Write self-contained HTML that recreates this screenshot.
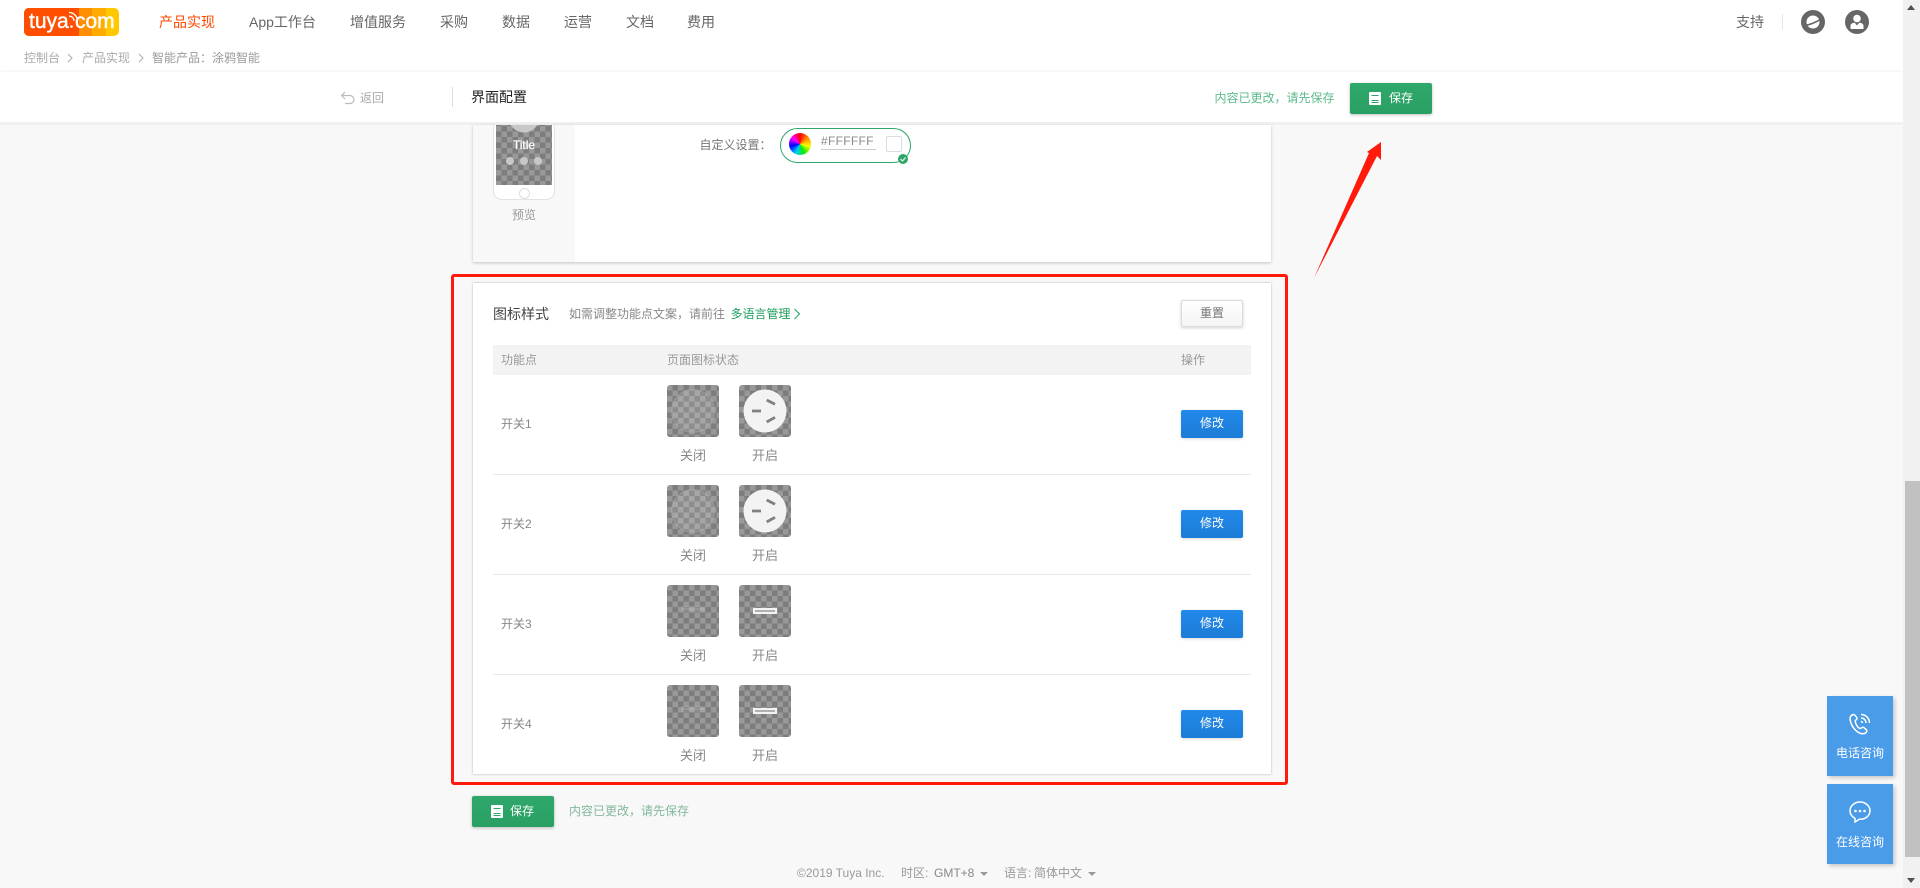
<!DOCTYPE html>
<html lang="zh-CN"><head><meta charset="utf-8"><title>界面配置</title>
<style>
html,body{margin:0;padding:0;width:1920px;height:888px;overflow:hidden;background:#f8f8f8}
body{position:relative;font-family:"Liberation Sans","Noto Sans CJK SC",sans-serif;font-size:12px;color:#888}
div,span,svg{position:absolute;display:block}
.t{line-height:20px;height:20px;white-space:nowrap}
.nav{top:12px;font-size:14px;color:#666}
.bc{top:48px;color:#aaa}
.ck{width:52px;height:52px;border-radius:3px;background:conic-gradient(#7d7d7d 25%,#999 0 50%,#7d7d7d 0 75%,#999 0) 0 0/11px 11px}
.lb{font-size:13px;color:#888;width:52px;text-align:center}
.btn{color:#fff;text-align:center;border-radius:2px;box-sizing:border-box}
.mod{left:1181px;width:62px;height:28px;line-height:27px;background:linear-gradient(#2289ea,#1c7cd6);box-shadow:0 1px 3px rgba(0,0,0,.15)}
.sv{width:82px;height:31px;line-height:31px;background:linear-gradient(#2fa86b,#2a9f64);box-shadow:0 1px 3px rgba(0,0,0,.25)}
.line{left:493px;width:758px;height:1px;background:#e8e8e8}
.side{left:1827px;width:66px;height:80px;background:#4a9be8;box-shadow:2px 2px 4px rgba(0,0,0,.2)}
.side .t{left:0;width:66px;text-align:center;color:#fff;top:48px}
</style></head><body>

<!-- header -->
<div style="left:0;top:0;width:1903px;height:72px;background:#fff"></div>
<svg style="left:24px;top:8px" width="95" height="28" viewBox="0 0 95 28">
<defs><clipPath id="lg"><rect width="95" height="28" rx="5"/></clipPath></defs>
<g clip-path="url(#lg)"><rect width="95" height="28" fill="#ffc800"/><rect width="82" height="28" fill="#ffab00"/><rect width="68" height="28" fill="#ff8f00"/><rect width="55" height="28" fill="#ff4e00"/></g>
<text x="5" y="20" font-family="Liberation Sans" font-size="21" fill="#fff" stroke="#fff" stroke-width=".4">tuya</text>
<circle cx="47.500" cy="18.500" r="1.300" fill="#fff"/>
<text x="51" y="20" font-family="Liberation Sans" font-size="21" fill="#fff" stroke="#fff" stroke-width=".4">com</text>
<path d="M45 8a5 5 0 0 1 5 5M45 4.500a8.500 8.500 0 0 1 8.500 8.500" fill="none" stroke="#fff" stroke-width="1.300"/>
</svg>
<div class="t nav" style="left:159px;color:#ff4800">产品实现</div>
<div class="t nav" style="left:249px">App工作台</div>
<div class="t nav" style="left:350px">增值服务</div>
<div class="t nav" style="left:440px">采购</div>
<div class="t nav" style="left:502px">数据</div>
<div class="t nav" style="left:564px">运营</div>
<div class="t nav" style="left:626px">文档</div>
<div class="t nav" style="left:687px">费用</div>

<div class="t bc" style="left:24px">控制台</div>
<svg style="left:66px;top:53px" width="8" height="10"><path d="M2 1l4 4-4 4" fill="none" stroke="#aaa"/></svg>
<div class="t bc" style="left:82px">产品实现</div>
<svg style="left:137px;top:53px" width="8" height="10"><path d="M2 1l4 4-4 4" fill="none" stroke="#aaa"/></svg>
<div class="t bc" style="left:152px;color:#999">智能产品：涂鸦智能</div>

<div class="t" style="left:1736px;top:12px;font-size:14px;color:#666">支持</div>
<div style="left:1782px;top:14px;width:1px;height:16px;background:#e5e5e5"></div>
<svg style="left:1801px;top:10px" width="24" height="24" viewBox="0 0 24 24"><circle cx="12" cy="12" r="12" fill="#666"/><circle cx="12" cy="12" r="6.500" fill="#fff"/><path d="M3.500 15.500C8 15 15 12.500 20 9" fill="none" stroke="#666" stroke-width="1.600"/></svg>
<svg style="left:1845px;top:10px" width="24" height="24" viewBox="0 0 24 24"><circle cx="12" cy="12" r="12" fill="#666"/><circle cx="12" cy="8.500" r="3.800" fill="#fff"/><path d="M5.500 19v-3.500c0-1.500 2-2.500 4-3l2.500 3 2.500-3c2 .5 4 1.500 4 3V19z" fill="#fff"/></svg>

<!-- sub-bar -->
<div style="left:0;top:72px;width:1903px;height:50px;background:#fff;box-shadow:0 0 4px rgba(0,0,0,.08)"></div>
<div style="left:0;top:122px;width:1903px;height:3px;background:#f1f1f1"></div>
<svg style="left:340px;top:91px" width="16" height="14" viewBox="0 0 16 14"><path d="M5 1L1.500 4.500 5 8M2 4.500h8a4 4 0 0 1 0 8H5" fill="none" stroke="#bbb" stroke-width="1.200"/></svg>
<div class="t" style="left:360px;top:88px;color:#aaa">返回</div>
<div style="left:452px;top:87px;width:1px;height:20px;background:#ddd"></div>
<div class="t" style="left:471px;top:87px;font-size:14px;color:#222">界面配置</div>
<div class="t" style="left:1214.500px;top:88px;color:#5dba8c">内容已更改，请先保存</div>
<div class="btn sv" style="left:1350px;top:83px"><svg style="left:19px;top:9px" width="12" height="13" viewBox="0 0 12 13"><path d="M1 0h10a1 1 0 0 1 1 1v11a1 1 0 0 1-1 1H1a1 1 0 0 1-1-1V1a1 1 0 0 1 1-1z" fill="#fff"/><path d="M2.500 3.500h7M2.500 8.500h7M2.500 10.500h7" stroke="#2ca468" stroke-width="1.100"/></svg><span style="left:39px;top:0">保存</span></div>

<!-- card 1 -->
<div style="left:473px;top:125px;width:798px;height:137px;background:#fff;box-shadow:0 1px 3px rgba(0,0,0,.22)"></div>
<div style="left:473px;top:125px;width:102px;height:137px;background:#f8f8f8"></div>
<div style="left:493px;top:100px;width:60px;height:98px;border:1px solid #e3e3e3;border-radius:9px;background:#fff;clip-path:inset(25px -2px -2px -2px)"></div>
<div class="ck" style="left:496px;top:125px;width:56px;height:60px;border-radius:0;background-position:0 1px"></div>
<svg style="left:496px;top:125px" width="56" height="8"><circle cx="28" cy="-8" r="15.500" fill="#c8c8c8"/></svg>
<div class="t" style="left:496px;top:135px;width:56px;text-align:center;color:#fff;-webkit-text-stroke:.25px #fff">Title</div>
<div style="left:506px;top:157px;width:8px;height:8px;border-radius:50%;background:#c8c8c8"></div>
<div style="left:520px;top:157px;width:8px;height:8px;border-radius:50%;background:#c8c8c8"></div>
<div style="left:534px;top:157px;width:8px;height:8px;border-radius:50%;background:#c8c8c8"></div>
<div style="left:519px;top:188px;width:9px;height:9px;border:1px solid #ddd;border-radius:50%;background:#fff"></div>
<div class="t" style="left:512px;top:205px;color:#999">预览</div>

<div class="t" style="left:699.500px;top:135px;color:#777">自定义设置：</div>
<div style="left:780px;top:128px;width:129px;height:33px;border:1px solid #2da66a;border-radius:18px;background:#fff"></div>
<div style="left:789px;top:133px;width:22px;height:22px;border-radius:50%;background:conic-gradient(#f00,#f80,#ff0,#0e0,#0cf,#00f,#f0f,#f00)"></div>
<div class="t" style="left:821px;top:131px;color:#8a8a8a;letter-spacing:.3px">#FFFFFF</div>
<div style="left:821px;top:149px;width:55px;height:1px;background:#ccc"></div>
<div style="left:886px;top:136px;width:14px;height:14px;border:1px solid #ddd;border-radius:2px;background:#fff"></div>
<svg style="left:898px;top:154px" width="10" height="10" viewBox="0 0 10 10"><circle cx="5" cy="5" r="5" fill="#2da66a"/><path d="M2.500 5l2 2 3-3.500" fill="none" stroke="#fff"/></svg>

<!-- card 2 -->
<div style="left:473px;top:283px;width:798px;height:491px;background:#fff;box-shadow:0 0 2px rgba(0,0,0,.3)"></div>
<div style="left:451px;top:274px;width:831px;height:505px;border:3px solid #ff1a0c;border-radius:3px"></div>

<div class="t" style="left:493px;top:304px;font-size:14px;color:#444">图标样式</div>
<div class="t" style="left:569px;top:304px;color:#888">如需调整功能点文案，请前往</div>
<div class="t" style="left:730.500px;top:304px;color:#1f9d5e">多语言管理</div>
<svg style="left:793px;top:308px" width="8" height="12"><path d="M1.500 1l5 5-5 5" fill="none" stroke="#2da66a" stroke-width="1.100"/></svg>
<div class="btn" style="left:1181px;top:300px;width:62px;height:27px;line-height:25px;border:1px solid #ddd;background:linear-gradient(#fff,#f4f4f4);color:#777;box-shadow:0 1px 3px rgba(0,0,0,.18)">重置</div>

<div style="left:493px;top:345px;width:758px;height:30px;background:#f3f3f3"></div>
<div class="t" style="left:501px;top:350px;color:#999">功能点</div>
<div class="t" style="left:667px;top:350px;color:#999">页面图标状态</div>
<div class="t" style="left:1181px;top:350px;color:#999">操作</div>

<!-- row 1 -->
<div class="t" style="left:501px;top:414px">开关1</div>
<div class="ck" style="left:667px;top:385px"><svg style="left:0;top:0" width="52" height="52"><circle cx="26" cy="26" r="21.500" fill="#fff" fill-opacity=".13" stroke="#aaa" stroke-opacity=".6"/></svg></div>
<div class="ck" style="left:739px;top:385px"><svg style="left:0;top:0" width="52" height="52"><circle cx="26" cy="26" r="21.500" fill="#f3f3f3"/><path d="M13 26h9M27.700 15l8.300 4.300M27.700 37l8.300-4.700" stroke="#808080" stroke-width="2.800"/></svg></div>
<div class="t lb" style="left:667px;top:446px">关闭</div>
<div class="t lb" style="left:739px;top:446px">开启</div>
<div class="btn mod" style="top:410px">修改</div>
<div class="line" style="top:474px"></div>

<!-- row 2 -->
<div class="t" style="left:501px;top:514px">开关2</div>
<div class="ck" style="left:667px;top:485px"><svg style="left:0;top:0" width="52" height="52"><circle cx="26" cy="26" r="21.500" fill="#fff" fill-opacity=".13" stroke="#aaa" stroke-opacity=".6"/></svg></div>
<div class="ck" style="left:739px;top:485px"><svg style="left:0;top:0" width="52" height="52"><circle cx="26" cy="26" r="21.500" fill="#f3f3f3"/><path d="M13 26h9M27.700 15l8.300 4.300M27.700 37l8.300-4.700" stroke="#808080" stroke-width="2.800"/></svg></div>
<div class="t lb" style="left:667px;top:546px">关闭</div>
<div class="t lb" style="left:739px;top:546px">开启</div>
<div class="btn mod" style="top:510px">修改</div>
<div class="line" style="top:574px"></div>

<!-- row 3 -->
<div class="t" style="left:501px;top:614px">开关3</div>
<div class="ck" style="left:667px;top:585px"><svg style="left:0;top:0" width="52" height="52"><rect x="14" y="21" width="24" height="6" fill="#fff" fill-opacity=".1"/><path d="M15 24h22" stroke="#fff" stroke-opacity=".2"/></svg></div>
<div class="ck" style="left:739px;top:585px"><svg style="left:0;top:0" width="52" height="52"><rect x="14" y="23" width="24" height="6" fill="#f3f3f3"/><path d="M16 26h20" stroke="#888" stroke-width="1.200"/></svg></div>
<div class="t lb" style="left:667px;top:646px">关闭</div>
<div class="t lb" style="left:739px;top:646px">开启</div>
<div class="btn mod" style="top:610px">修改</div>
<div class="line" style="top:674px"></div>

<!-- row 4 -->
<div class="t" style="left:501px;top:714px">开关4</div>
<div class="ck" style="left:667px;top:685px"><svg style="left:0;top:0" width="52" height="52"><rect x="14" y="21" width="24" height="6" fill="#fff" fill-opacity=".1"/><path d="M15 24h22" stroke="#fff" stroke-opacity=".2"/></svg></div>
<div class="ck" style="left:739px;top:685px"><svg style="left:0;top:0" width="52" height="52"><rect x="14" y="23" width="24" height="6" fill="#f3f3f3"/><path d="M16 26h20" stroke="#888" stroke-width="1.200"/></svg></div>
<div class="t lb" style="left:667px;top:746px">关闭</div>
<div class="t lb" style="left:739px;top:746px">开启</div>
<div class="btn mod" style="top:710px">修改</div>

<!-- bottom save -->
<div class="btn sv" style="left:472px;top:796px"><svg style="left:19px;top:9px" width="12" height="13" viewBox="0 0 12 13"><path d="M1 0h10a1 1 0 0 1 1 1v11a1 1 0 0 1-1 1H1a1 1 0 0 1-1-1V1a1 1 0 0 1 1-1z" fill="#fff"/><path d="M2.500 3.500h7M2.500 8.500h7M2.500 10.500h7" stroke="#2ca468" stroke-width="1.100"/></svg><span style="left:38px;top:0">保存</span></div>
<div class="t" style="left:569px;top:801px;color:#82b99b">内容已更改，请先保存</div>

<!-- footer -->
<div class="t" style="left:797px;top:863px;color:#999">©2019 Tuya Inc.</div>
<div class="t" style="left:901px;top:863px;color:#999">时区:</div>
<div class="t" style="left:934px;top:863px;color:#888">GMT+8</div>
<div style="left:980px;top:872px;border:4px solid transparent;border-top:4px solid #999"></div>
<div class="t" style="left:1004px;top:863px;color:#999">语言:</div>
<div class="t" style="left:1034px;top:863px;color:#999">简体中文</div>
<div style="left:1088px;top:872px;border:4px solid transparent;border-top:4px solid #999"></div>

<!-- annotation arrow -->
<svg style="left:0;top:0" width="1920" height="888"><polygon points="1314,278 1369,153 1367,152 1381,142 1381,160 1377,156" fill="#ff1a0c"/></svg>

<!-- side buttons -->
<div class="side" style="top:696px">
<svg style="left:21px;top:16px" width="24" height="24" viewBox="0 0 24 24" fill="none" stroke="#fff" stroke-width="1.500"><path d="M5 2.500C2.500 3.500 1.500 6 2.500 9.500 4 15 8 20 13 21.500c3 .8 5.500-.5 5.800-2.500.1-1-2.500-3.500-4-3.800-1-.2-1.500 1.500-2.800 1.300C10 16 7.500 12 7.200 9.500 7 8 9 7.800 9 6.500 9 5 6 2 5 2.500z"/><path d="M13 6a5 5 0 0 1 5 5M13 2.500a8.500 8.500 0 0 1 8.500 8.500M13 9.500a1.500 1.500 0 0 1 1.500 1.500"/></svg>
<div class="t" style="top:47px">电话咨询</div></div>
<div class="side" style="top:784px">
<svg style="left:22px;top:17px" width="22" height="22" viewBox="0 0 22 22"><path d="M11 1C5.500 1 1 4.800 1 9.800c0 3.400 2 6 5 7.500v3.700l4.200-2.700h.8c5.500 0 10-3.600 10-8.500S16.500 1 11 1z" fill="none" stroke="#fff" stroke-width="1.500"/><circle cx="6.500" cy="10" r="1.300" fill="#fff"/><circle cx="11" cy="10" r="1.300" fill="#fff"/><circle cx="15.500" cy="10" r="1.300" fill="#fff"/></svg>
<div class="t">在线咨询</div></div>

<!-- scrollbar -->
<div style="left:1903px;top:0;width:17px;height:888px;background:#f1f1f1"></div>
<div style="left:1905px;top:481px;width:15px;height:376px;background:#c1c1c1"></div>
<div style="left:1907px;top:5px;border:4.500px solid transparent;border-top:0;border-bottom:5px solid #505050"></div>
<div style="left:1907px;top:878px;border:4.500px solid transparent;border-bottom:0;border-top:5px solid #505050"></div>
</body></html>
